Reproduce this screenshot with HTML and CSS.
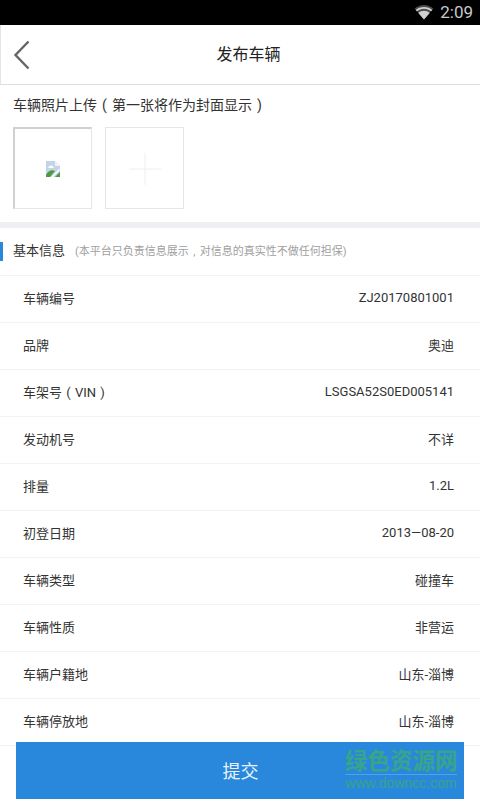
FILE: index.html
```html
<!DOCTYPE html>
<html lang="zh-CN">
<head>
<meta charset="utf-8">
<title>发布车辆</title>
<link rel="stylesheet" href="styles.css">
</head>
<body>
<div class="phone">
  <div class="status">
    <svg class="wifi" width="20" height="16" viewBox="0 0 20 16"><path d="M10 15.500 0.600 4.600C3.200 2.400 6.400 1 10 1s6.800 1.400 9.400 3.600z" fill="#4a4a4a"/><path d="M10 15.500 4.300 8.900C5.900 7.600 7.800 6.800 10 6.800s4.100.8 5.700 2.100zM10 4.700c-2.700 0-5.100 1-7.100 2.600L1.700 5.900C3.900 4.100 6.800 3 10 3s6.100 1.100 8.300 2.900l-1.200 1.400C15.100 5.700 12.700 4.700 10 4.700z" fill="#d0d0d0"/></svg>
    <span class="time">2:09</span>
  </div>
  <header class="topbar">
    <svg class="back" width="18" height="30" viewBox="0 0 18 30"><path d="M15.500 1.500 2.500 15l13 13.500" fill="none" stroke="#666" stroke-width="2.400"/></svg>
    <h1 class="title">发布车辆</h1>
  </header>
  <section class="photos">
    <p class="photos-label">车辆照片上传<span class="paren-lg">(</span>第一张将作为封面显示<span class="paren-lg">)</span></p>
    <div class="thumbs">
      <div class="thumb thumb-first">
        <svg width="14" height="16" viewBox="0 0 14 16"><path d="M0 0h9l5 5v11H0z" fill="#c3d3e8"/><path d="M9 0l5 5H9z" fill="#eef2f7"/><path d="M3 5.500c1-1.500 3-1.500 4 0 1 .2 1 1.500 0 1.500H3c-1 0-1-1.300 0-1.500z" fill="#fff"/><path d="M0 16v-2c2-4 6-6 9-4l-5 6z" fill="#4f9a3c"/><path d="M9 16l5-5v5z" fill="#4f9a3c"/><path d="M5 16l8-8 1 1-7 7z" fill="#fff"/></svg>
      </div>
      <div class="thumb">
        <svg class="plus" width="32" height="32" viewBox="0 0 32 32"><path d="M16 0v32M0 16h32" stroke="#eeeeee" stroke-width="1"/></svg>
      </div>
    </div>
  </section>
  <div class="band"></div>
  <div class="info-head">
    <span class="marker"></span>
    <span class="info-title">基本信息</span>
    <span class="info-note">(本平台只负责信息展示<span class="comma">,</span>对信息的真实性不做任何担保)</span>
  </div>
  <ul class="rows">
    <li class="row"><span>车辆编号</span><span>ZJ20170801001</span></li>
    <li class="row"><span>品牌</span><span>奥迪</span></li>
    <li class="row"><span>车架号<span class="paren-sm">(</span>VIN<span class="paren-sm">)</span></span><span>LSGSA52S0ED005141</span></li>
    <li class="row"><span>发动机号</span><span>不详</span></li>
    <li class="row"><span>排量</span><span>1.2L</span></li>
    <li class="row"><span>初登日期</span><span>2013—08-20</span></li>
    <li class="row"><span>车辆类型</span><span>碰撞车</span></li>
    <li class="row"><span>车辆性质</span><span>非营运</span></li>
    <li class="row"><span>车辆户籍地</span><span>山东-淄博</span></li>
    <li class="row"><span>车辆停放地</span><span>山东-淄博</span></li>
    <li class="row"></li>
  </ul>
  <button class="submit">提交</button>
  <div class="watermark">
    <div class="wm-cn">绿色资源网</div>
    <div class="wm-en">www.downcc.com</div>
  </div>
</div>
</body>
</html>
```
FILE: styles.css
```css
* { box-sizing: border-box; }
html, body { margin: 0; padding: 0; }
body {
  font-family: Roboto, "Noto Sans CJK SC", sans-serif;
  background: #fff;
  color: #333;
}
.phone {
  position: relative;
  width: 480px;
  height: 800px;
  overflow: hidden;
  background: #fff;
}
.status {
  height: 25px;
  background: #000;
  display: flex;
  align-items: center;
  justify-content: flex-end;
  padding-right: 7px;
  gap: 6px;
}
.time { color: #c8c8c8; font-size: 17px; line-height: 25px; }
.wifi { margin-top: -1px; }
.topbar {
  position: relative;
  height: 60px;
  padding: 0 0 3px 16px;
  border-left: 1px solid #e4e4e4;
  border-bottom: 1px solid #dedede;
  display: flex;
  align-items: center;
  justify-content: center;
}
.back { position: absolute; left: 12px; top: 15px; }
.title { margin: 0; font-size: 16px; font-weight: 400; color: #222; }
.photos { padding: 10px 13px 0; height: 137px; }
.photos-label { margin: 0; font-size: 14px; line-height: 20px; color: #333; }
.paren-lg {
  display: inline-block;
  width: 15px;
  text-align: center;
}
.paren-sm {
  display: inline-block;
  width: 13px;
  text-align: center;
}
.comma {
  display: inline-block;
  width: 11px;
  text-align: center;
}
.thumbs { display: flex; gap: 13px; margin-top: 12px; }
.thumb {
  width: 79px;
  height: 82px;
  border: 1px solid #e6e6e6;
  display: flex;
  align-items: center;
  justify-content: center;
}
.thumb-first { border-top: 2px solid #d0d0d0; border-left: 2px solid #d0d0d0; }
.plus { margin-top: 2px; }
.band { height: 6px; background: #eeeef3; }
.info-head {
  height: 47px;
  padding: 0 0 4px 13px;
  display: flex;
  align-items: center;
  position: relative;
}
.marker {
  position: absolute;
  left: 0;
  top: 14px;
  width: 3px;
  height: 19px;
  background: #2a88dc;
}
.info-title { font-size: 13px; color: #333; }
.info-note { font-size: 11px; color: #a0a0a0; margin-left: 10px; }
.rows { list-style: none; margin: 0; padding: 0; }
.row {
  height: 47px;
  border-top: 1px solid #f3f3f3;
  padding: 0 26px 3px 23px;
  display: flex;
  align-items: center;
  justify-content: space-between;
  font-size: 13px;
  color: #333;
}
.submit {
  position: absolute;
  left: 16px;
  top: 742px;
  width: 448px;
  height: 57px;
  padding: 0 0 2px 1px;
  border: 0;
  background: #2a88dc;
  color: #e8f2fb;
  font-family: inherit;
  font-size: 18px;
}
.watermark {
  position: absolute;
  left: 345px;
  top: 749px;
  width: 112px;
  color: #36a58a;
  text-align: center;
}
.wm-cn {
  font-size: 22.500px;
  line-height: 24px;
  font-weight: 700;
  white-space: nowrap;
  border-bottom: 1px solid #4ba5e0;
  padding-bottom: 1px;
}
.wm-en {
  font-family: "Liberation Sans", sans-serif;
  font-size: 14px;
  line-height: 16px;
  white-space: nowrap;
}
```
